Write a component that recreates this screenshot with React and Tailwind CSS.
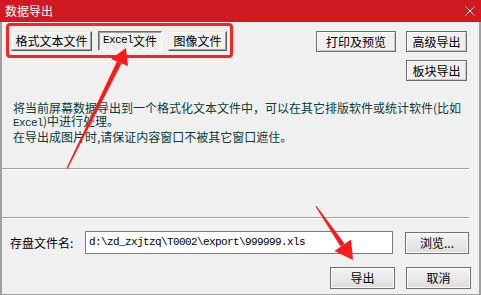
import React from "react";

const cjk = { fontFamily: '"Noto Sans CJK SC", "Noto Sans", sans-serif' };

function ClassicButton({ children, className = "", pressed = false }) {
  // old win32 style raised button
  return (
    <div
      className={`flex items-center justify-center h-[20px] text-[12px] leading-none text-black ${
        pressed
          ? "bg-[repeating-conic-gradient(#ffffff_0%_25%,#e6e6e6_0%_50%)] bg-[length:2px_2px] border border-t-[#6d6d6d] border-l-[#6d6d6d] border-r-white border-b-white shadow-[inset_1px_1px_0_#a0a0a0]"
          : "bg-[#f0f0f0] border border-t-[#e8e8e8] border-l-[#e8e8e8] border-r-[#5a5a5a] border-b-[#5a5a5a] shadow-[inset_-1px_-1px_0_#a0a0a0,inset_1px_1px_0_#ffffff]"
      } ${className}`}
      style={cjk}
    >
      {children}
    </div>
  );
}

function FlatButton({ children, className = "" }) {
  return (
    <div
      className={`flex items-center justify-center h-[21px] text-[12px] leading-none text-black bg-[#f0f0f0] border border-[#6d6d6d] shadow-[inset_1px_1px_0_#ffffff,inset_-1px_-1px_0_#c8c8c8] ${className}`}
      style={cjk}
    >
      {children}
    </div>
  );
}

function VistaButton({ children, className = "" }) {
  return (
    <div
      className={`flex items-center justify-center text-[12px] leading-none text-black bg-gradient-to-b from-[#f4f4f4] to-[#dddddd] border border-[#707070] shadow-[inset_0_0_0_1px_#fcfcfc] ${className}`}
      style={cjk}
    >
      {children}
    </div>
  );
}

function Mono({ children }) {
  return (
    <span
      className="text-[11px] tracking-[-0.6px]"
      style={{ fontFamily: '"Liberation Mono", monospace' }}
    >
      {children}
    </span>
  );
}

export default function App() {
  return (
    <div className="relative w-[481px] h-[295px] overflow-hidden flex flex-col bg-[#f0f0f0] select-none">
      {/* title bar */}
      <div className="h-[22px] bg-[#d01920] flex items-center justify-between pl-[5px] pr-[6px] shrink-0">
        <span className="text-white text-[12px] leading-none" style={cjk}>
          数据导出
        </span>
        <svg width="10" height="10" viewBox="0 0 10 10" className="mr-[0px]">
          <path d="M0.5 0.5 L9.5 9.5 M9.5 0.5 L0.5 9.5" stroke="#fff" strokeWidth="1" />
        </svg>
      </div>

      {/* body */}
      <div className="flex-1 flex flex-col border-l-2 border-r-2 border-b border-[#a0a0a0]">
        {/* top row */}
        <div className="flex items-start mt-[1px] h-[58px]">
          <div className="ml-[4px] w-[227px] h-[35px] border-[3px] border-[#ff2020] rounded-[4px] flex items-center pl-[2px] gap-[6px]">
            <ClassicButton className="w-[81px]">格式文本文件</ClassicButton>
            <ClassicButton pressed className="w-[64px]">
              <Mono>Excel</Mono>文件
            </ClassicButton>
            <ClassicButton className="w-[59px]">图像文件</ClassicButton>
          </div>
          <div className="ml-auto mr-[12px] mt-[8px] flex flex-col items-end gap-[8px]">
            <div className="flex gap-[10px]">
              <FlatButton className="w-[80px]">打印及预览</FlatButton>
              <FlatButton className="w-[61px]">高级导出</FlatButton>
            </div>
            <FlatButton className="w-[61px]">板块导出</FlatButton>
          </div>
        </div>

        {/* description */}
        <div
          className="mt-[20px] ml-[11px] text-[12px] leading-[13px] text-[#0a3c3c] whitespace-nowrap"
          style={cjk}
        >
          将当前屏幕数据导出到一个格式化文本文件中，可以在其它排版软件或统计软件(比如
          <br />
          <Mono>Excel</Mono>)中进行处理。
          <br />
          在导出成图片时,请保证内容窗口不被其它窗口遮住。
        </div>

        <div className="mt-[25px] mr-[10px] h-[1px] bg-[#a0a0a0] shadow-[0_1px_0_#ffffff]" />
        <div className="mt-[48px] mr-[10px] h-[1px] bg-[#a0a0a0] shadow-[0_1px_0_#ffffff]" />

        {/* file name row */}
        <div className="flex items-center mt-[13px] h-[23px]">
          <span className="ml-[8px] w-[75px] text-[12px] text-black" style={cjk}>
            存盘文件名:
          </span>
          <div className="w-[308px] h-[23px] bg-white border border-[#7a7a7a] flex items-center pl-[3px] text-black">
            <Mono>d:\zd_zxjtzq\T0002\export\999999.xls</Mono>
          </div>
          <VistaButton className="ml-[12px] w-[64px] h-[22px]">浏览...</VistaButton>
        </div>

        {/* action row */}
        <div className="flex items-center mt-[13px] ml-[328px] gap-[11px]">
          <VistaButton className="w-[65px] h-[22px]">导出</VistaButton>
          <VistaButton className="w-[65px] h-[22px]">取消</VistaButton>
        </div>
      </div>

      {/* annotation arrows */}
      <svg
        className="absolute inset-0 pointer-events-none"
        width="481"
        height="295"
        viewBox="0 0 481 295"
      >
        <polygon points="66.4,168.3 67.6,168.7 121.5,63.5 117,61.3" fill="#ff1a1a" />
        <polygon points="126,48 128,66 111,59" fill="#ff1a1a" />
        <polygon points="315.5,206.5 316.5,206 344.5,243.5 340.5,246.5" fill="#ff1a1a" />
        <polygon points="353,260 351,239.5 334.5,251" fill="#ff1a1a" />
      </svg>
    </div>
  );
}
